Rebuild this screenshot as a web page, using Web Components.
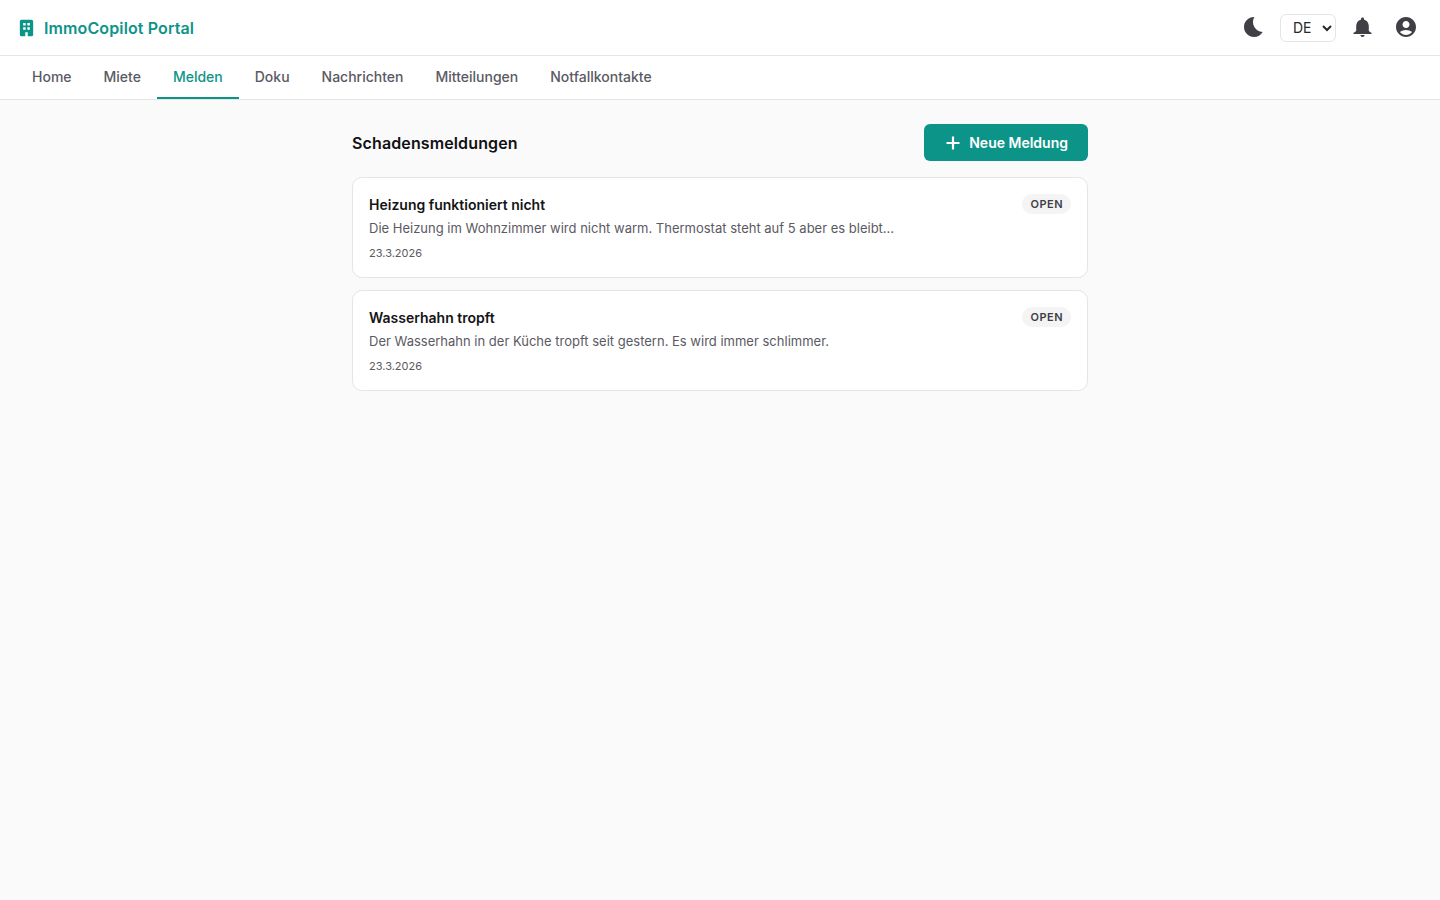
<!DOCTYPE html>
<html lang="de">
<head>
<meta charset="utf-8">
<title>ImmoCopilot Portal</title>
<style>
html, body { margin: 0; padding: 0; height: 100%; background: #fafafa; }
body { font-family: Inter, "Liberation Sans", sans-serif; }
</style>
</head>
<body>
<portal-app>
  <portal-header slot="header"></portal-header>
  <portal-nav slot="nav"></portal-nav>
  <report-list>
    <report-card title-text="Heizung funktioniert nicht" date="23.3.2026">Die Heizung im Wohnzimmer wird nicht warm. Thermostat steht auf 5 aber es bleibt...</report-card>
    <report-card title-text="Wasserhahn tropft" date="23.3.2026">Der Wasserhahn in der Küche tropft seit gestern. Es wird immer schlimmer.</report-card>
  </report-list>
</portal-app>

<script>
class PortalApp extends HTMLElement {
  constructor() {
    super();
    this.attachShadow({ mode: 'open' }).innerHTML = `
<style>
:host { display: flex; flex-direction: column; min-height: 100vh; background: #fafafa; }
main { display: flex; justify-content: center; padding-top: 24px; }
</style>
<slot name="header"></slot>
<slot name="nav"></slot>
<main><slot></slot></main>`;
  }
}

class PortalHeader extends HTMLElement {
  constructor() {
    super();
    this.attachShadow({ mode: 'open' }).innerHTML = `
<style>
:host { display: flex; align-items: center; justify-content: space-between; height: 55px; padding: 0 22px 0 16px; background: #fff; border-bottom: 1px solid #e5e5e5; }
.brand { display: flex; align-items: center; gap: 8px; color: #0d9488; font-size: 16px; font-weight: 600; letter-spacing: .12px; }
.brand svg { width: 20px; height: 20px; fill: currentColor; }
.actions { display: flex; align-items: center; }
.icon { display: flex; width: 24px; height: 24px; margin-bottom: 1px; color: #3f3f46; }
.icon svg { width: 24px; height: 24px; fill: currentColor; }
select { width: 56px; height: 28px; margin: 0 14px; padding: 0 4px 0 8px; font: 14px Inter, sans-serif; color: #27272a; background: #fff; border: 1px solid #e5e5e5; border-radius: 6px; }
.bell { margin-right: 20px; }
</style>
<div class="brand">
  <svg viewBox="-0.6 0 24 24"><path fill-rule="evenodd" d="M6 2h12a2 2 0 0 1 2 2v16a2 2 0 0 1-2 2H6a2 2 0 0 1-2-2V4a2 2 0 0 1 2-2zm2 4v3h3V6H8zm5 0v3h3V6h-3zm-5 5v3h3v-3H8zm5 0v3h3v-3h-3zm-2.500 6v5h3v-5h-3z"/></svg>
  <span>ImmoCopilot Portal</span>
</div>
<div class="actions">
  <span class="icon"><svg viewBox="0 0 24 24"><path d="M12.34 2.02C6.59 1.82 2 6.42 2 12c0 5.52 4.48 10 10 10 3.71 0 6.93-2.02 8.66-5.02-7.51-.25-12.09-8.43-8.32-14.96z"/></svg></span>
  <select aria-label="Sprache"><option>DE</option><option>EN</option></select>
  <span class="icon bell"><svg viewBox="0 0 24 24"><path transform="translate(12.500 0) scale(1.05 1) translate(-12 0)" d="M12 22c1.1 0 2-.9 2-2h-4c0 1.1.89 2 2 2zm6-6v-5c0-3.07-1.64-5.64-4.5-6.32V4c0-.83-.67-1.5-1.5-1.5s-1.5.67-1.5 1.5v.68C7.63 5.360 6 7.920 6 11v5l-2.600 2v1h17.200v-1L18 16z"/></svg></span>
  <span class="icon"><svg viewBox="0 0 24 24"><path d="M12 2C6.48 2 2 6.48 2 12s4.48 10 10 10 10-4.48 10-10S17.52 2 12 2zm0 4c1.93 0 3.5 1.57 3.5 3.5S13.93 13 12 13s-3.5-1.57-3.5-3.5S10.07 6 12 6zm0 14c-2.03 0-4.43-.82-6.14-2.88C7.55 15.8 9.68 15 12 15s4.45.8 6.14 2.12C16.43 19.18 14.03 20 12 20z"/></svg></span>
</div>`;
  }
}

class PortalNav extends HTMLElement {
  constructor() {
    super();
    const tabs = ['Home', 'Miete', 'Melden', 'Doku', 'Nachrichten', 'Mitteilungen', 'Notfallkontakte'];
    this.attachShadow({ mode: 'open' }).innerHTML = `
<style>
:host { display: flex; height: 43px; padding: 0 16px; background: #fff; border-bottom: 1px solid #e5e5e5; }
a { display: flex; align-items: center; padding: 0 16px; font-size: 14px; font-weight: 500; color: #5a5a63; text-decoration: none; border-bottom: 2px solid transparent; }
a.active { color: #0d9488; border-bottom-color: #0d9488; }
</style>
${tabs.map(t => `<a href="#" class="${t === 'Melden' ? 'active' : ''}">${t}</a>`).join('')}`;
  }
}

class ReportList extends HTMLElement {
  constructor() {
    super();
    this.attachShadow({ mode: 'open' }).innerHTML = `
<style>
:host { display: block; width: 736px; }
.head { display: flex; align-items: center; justify-content: space-between; margin-bottom: 16px; }
h2 { margin: 0; font-size: 16px; font-weight: 600; letter-spacing: .12px; color: #111113; }
button { display: flex; align-items: center; gap: 7px; height: 37px; padding: 0 20px; font: 600 14px Inter, sans-serif; color: #fff; background: #0d9488; border: 0; border-radius: 6px; }
button svg { width: 18px; height: 18px; fill: none; stroke: currentColor; stroke-width: 2.2; }
.items { display: flex; flex-direction: column; gap: 12px; }
</style>
<div class="head">
  <h2>Schadensmeldungen</h2>
  <button><svg viewBox="0 0 18 18"><path d="M9 2.500v13M2.500 9h13"/></svg>Neue Meldung</button>
</div>
<div class="items"><slot></slot></div>`;
  }
}

class ReportCard extends HTMLElement {
  constructor() {
    super();
    this.attachShadow({ mode: 'open' }).innerHTML = `
<style>
:host { display: block; box-sizing: border-box; height: 101px; padding: 16px; background: #fff; border: 1px solid #e5e5e5; border-radius: 10px; }
.top { display: flex; align-items: flex-start; justify-content: space-between; height: 22px; }
.title { font-size: 14px; font-weight: 600; line-height: 22px; color: #141416; }
.badge { height: 20px; padding: 0 8px; font-size: 11px; font-weight: 600; line-height: 20px; letter-spacing: .5px; color: #3f3f46; background: #f4f4f5; border-radius: 10px; }
.desc { margin-top: 2px; font-size: 13px; line-height: 20px; color: #5a5a63; }
.date { margin-top: 7px; font-size: 11px; line-height: 16px; color: #5a5a63; }
</style>
<div class="top"><span class="title"></span><span class="badge">OPEN</span></div>
<div class="desc"><slot></slot></div>
<div class="date"></div>`;
    this.shadowRoot.querySelector('.title').textContent = this.getAttribute('title-text');
    this.shadowRoot.querySelector('.date').textContent = this.getAttribute('date');
  }
}

customElements.define('portal-app', PortalApp);
customElements.define('portal-header', PortalHeader);
customElements.define('portal-nav', PortalNav);
customElements.define('report-list', ReportList);
customElements.define('report-card', ReportCard);
</script>
</body>
</html>
